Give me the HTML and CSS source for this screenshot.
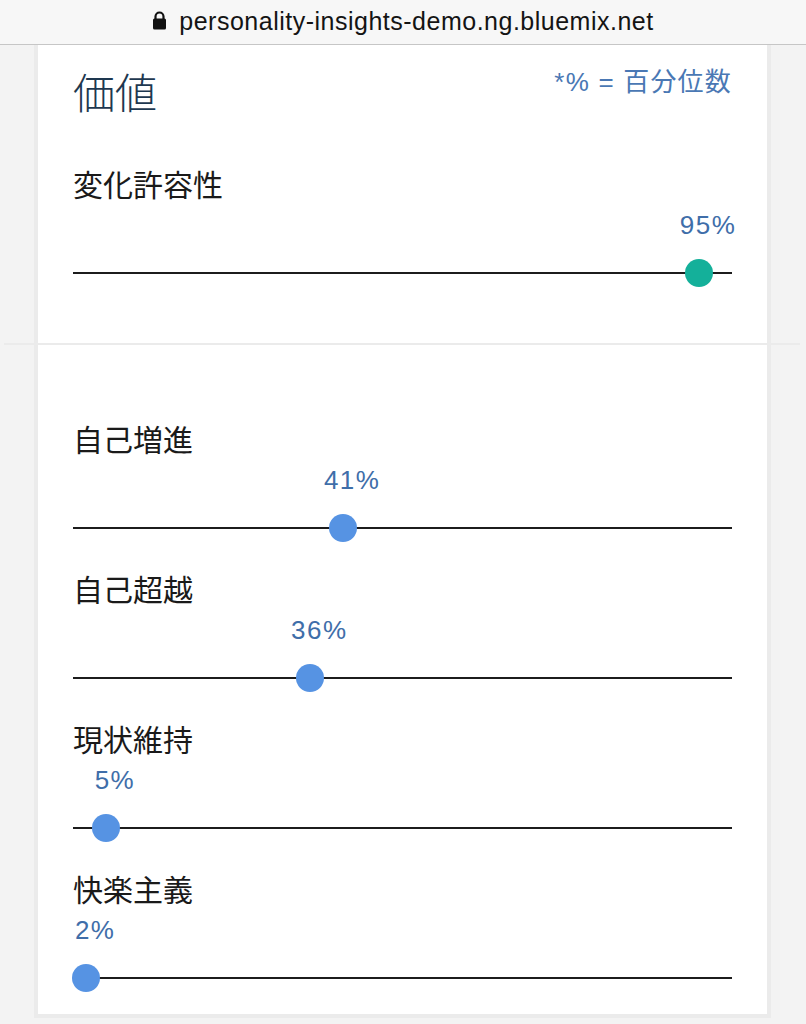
FILE: index.html
```html
<!DOCTYPE html>
<html lang="ja">
<head>
<meta charset="utf-8">
<title>価値</title>
<link rel="stylesheet" href="styles.css">
</head>
<body>
<div class="urlbar">
  <svg class="lock" width="15" height="19" viewBox="0 0 15 19" aria-hidden="true">
    <path d="M3.5 8 V5.5 A4 4 0 0 1 11.5 5.5 V8" fill="none" stroke="#111" stroke-width="2.2"/>
    <rect x="1" y="7.5" width="13" height="11" rx="1.5" fill="#111"/>
  </svg>
  <span class="url">personality-insights-demo.ng.bluemix.net</span>
</div>

<div class="card card-top">
  <div class="header">
    <h1 class="title">価値</h1>
    <div class="legend">*% = 百分位数</div>
  </div>
  <div class="item" style="--p:95">
    <div class="label">変化許容性</div>
    <div class="pct-row"><span class="pct">95%</span></div>
    <div class="track"><span class="knob teal"></span></div>
  </div>
</div>

<div class="divider"></div>

<div class="card card-bottom">
  <div class="item" style="--p:41">
    <div class="label">自己増進</div>
    <div class="pct-row"><span class="pct">41%</span></div>
    <div class="track"><span class="knob"></span></div>
  </div>
  <div class="item" style="--p:36">
    <div class="label">自己超越</div>
    <div class="pct-row"><span class="pct">36%</span></div>
    <div class="track"><span class="knob"></span></div>
  </div>
  <div class="item" style="--p:5">
    <div class="label">現状維持</div>
    <div class="pct-row"><span class="pct">5%</span></div>
    <div class="track"><span class="knob"></span></div>
  </div>
  <div class="item" style="--p:2">
    <div class="label">快楽主義</div>
    <div class="pct-row"><span class="pct">2%</span></div>
    <div class="track"><span class="knob"></span></div>
  </div>
</div>
</body>
</html>
```

FILE: styles.css
```css
* { box-sizing: border-box; }

html, body {
  margin: 0;
  padding: 0;
  background: #f3f3f3;
  font-family: "Liberation Sans", "Noto Sans CJK JP", sans-serif;
}

.urlbar {
  height: 45px;
  background: #f7f7f7;
  border-bottom: 1px solid #c6c6c6;
  display: flex;
  align-items: center;
  justify-content: center;
  gap: 12px;
  padding-bottom: 2px;
}

.lock { display: block; margin-top: -2px; }

.url {
  font-size: 25px;
  color: #141414;
  letter-spacing: 0.5px;
}

.card {
  margin: 0 35px 0 34px;
  background: #fff;
  border-left: 4px solid #ebebeb;
  border-right: 4px solid #ebebeb;
  padding: 0 35px;
  display: flex;
  flex-direction: column;
  gap: 29px;
}

.card-top {
  padding-top: 21px;
  padding-bottom: 56px;
}

.card-top .header { margin-bottom: 21px; }

.card-bottom {
  padding-top: 76px;
  padding-bottom: 22px;
  border-bottom: 4px solid #ebebeb;
}

.divider {
  height: 2px;
  margin: 0 6px 0 4px;
  background: #ebebeb;
}

.header {
  display: flex;
  justify-content: space-between;
  align-items: flex-start;
}

.title {
  margin: 0;
  font-family: "Noto Sans CJK JP", sans-serif;
  font-weight: 300;
  font-size: 42px;
  line-height: 50px;
  color: #1e3850;
}

.legend {
  margin-top: 1px;
  font-size: 26px;
  line-height: 30px;
  letter-spacing: 1.2px;
  color: #4a78b4;
  font-family: "Liberation Sans", "Noto Sans CJK JP", sans-serif;
}

.item {
  display: flex;
  flex-direction: column;
}

.label {
  font-family: "Noto Sans CJK JP", sans-serif;
  font-size: 30px;
  line-height: 34px;
  color: #1a1a1a;
  margin-bottom: 10px;
}

.pct-row {
  position: relative;
  height: 30px;
  margin-bottom: 19px;
}

.pct {
  position: absolute;
  top: 0;
  left: calc(var(--p) * 1% + 9px);
  transform: translateX(-50%);
  font-size: 26px;
  line-height: 30px;
  letter-spacing: 1.5px;
  color: #3f6ea9;
  white-space: nowrap;
}

.track {
  position: relative;
  height: 28px;
}

.track::before {
  content: "";
  position: absolute;
  left: 0;
  right: 0;
  top: 13px;
  height: 2px;
  background: #1c1c1c;
}

.knob {
  position: absolute;
  top: 0;
  left: calc(var(--p) * 1% - 14px);
  width: 28px;
  height: 28px;
  border-radius: 50%;
  background: #5693e3;
}

.knob.teal { background: #14b09a; }
```
